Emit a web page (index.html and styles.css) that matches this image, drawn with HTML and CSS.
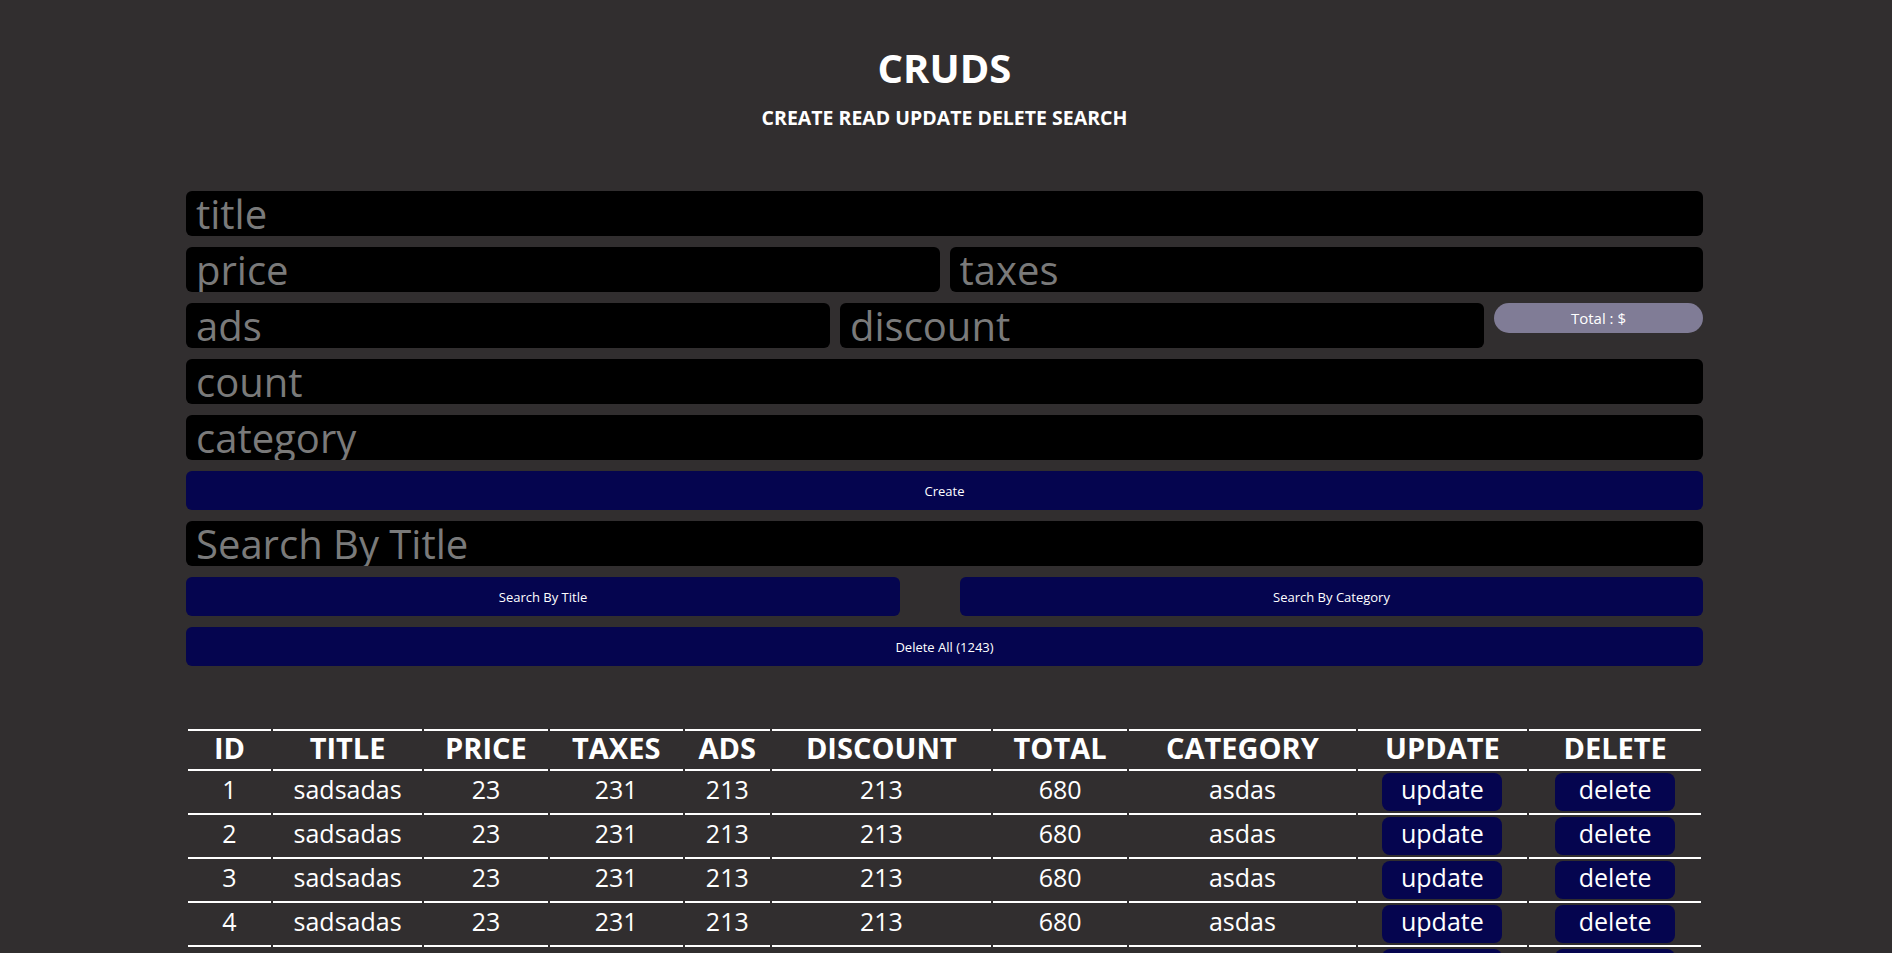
FILE: index.html
```html
<!DOCTYPE html>
<html lang="en">
<head>
<meta charset="utf-8">
<title>CRUDS</title>
<link rel="stylesheet" href="styles.css">
</head>
<body>
<div class="crud">
  <header class="head">
    <h1 class="head-title">CRUDS</h1>
    <h4 class="head-sub">CREATE READ UPDATE DELETE SEARCH</h4>
  </header>

  <div class="inputs">
    <input class="field" type="text" placeholder="title">
    <div class="price-row">
      <input class="field" type="number" placeholder="price">
      <input class="field" type="number" placeholder="taxes">
    </div>
    <div class="ads-row">
      <input class="field" type="number" placeholder="ads">
      <input class="field" type="number" placeholder="discount">
      <small class="total">Total : $</small>
    </div>
    <input class="field" type="number" placeholder="count">
    <input class="field" type="text" placeholder="category">
    <button class="btn">Create</button>
    <input class="field" type="text" placeholder="Search By Title">
    <div class="search-btns">
      <button class="btn">Search By Title</button>
      <button class="btn">Search By Category</button>
    </div>
    <button class="btn">Delete All (1243)</button>
  </div>

  <table class="products">
    <thead>
      <tr>
        <th class="c-id">ID</th>
        <th class="c-title">TITLE</th>
        <th class="c-price">PRICE</th>
        <th class="c-taxes">TAXES</th>
        <th class="c-ads">ADS</th>
        <th class="c-discount">DISCOUNT</th>
        <th class="c-total">TOTAL</th>
        <th class="c-category">CATEGORY</th>
        <th class="c-update">UPDATE</th>
        <th class="c-delete">DELETE</th>
      </tr>
    </thead>
    <tbody>
      <tr><td>1</td><td>sadsadas</td><td>23</td><td>231</td><td>213</td><td>213</td><td>680</td><td>asdas</td><td><button class="row-btn">update</button></td><td><button class="row-btn">delete</button></td></tr>
      <tr><td>2</td><td>sadsadas</td><td>23</td><td>231</td><td>213</td><td>213</td><td>680</td><td>asdas</td><td><button class="row-btn">update</button></td><td><button class="row-btn">delete</button></td></tr>
      <tr><td>3</td><td>sadsadas</td><td>23</td><td>231</td><td>213</td><td>213</td><td>680</td><td>asdas</td><td><button class="row-btn">update</button></td><td><button class="row-btn">delete</button></td></tr>
      <tr><td>4</td><td>sadsadas</td><td>23</td><td>231</td><td>213</td><td>213</td><td>680</td><td>asdas</td><td><button class="row-btn">update</button></td><td><button class="row-btn">delete</button></td></tr>
      <tr><td>5</td><td>sadsadas</td><td>23</td><td>231</td><td>213</td><td>213</td><td>680</td><td>asdas</td><td><button class="row-btn">update</button></td><td><button class="row-btn">delete</button></td></tr>
      <tr><td>6</td><td>sadsadas</td><td>23</td><td>231</td><td>213</td><td>213</td><td>680</td><td>asdas</td><td><button class="row-btn">update</button></td><td><button class="row-btn">delete</button></td></tr>
      <tr><td>7</td><td>sadsadas</td><td>23</td><td>231</td><td>213</td><td>213</td><td>680</td><td>asdas</td><td><button class="row-btn">update</button></td><td><button class="row-btn">delete</button></td></tr>
    </tbody>
  </table>
</div>
</body>
</html>
```

FILE: styles.css
```css
* {
  box-sizing: border-box;
}

body {
  margin: 0;
  background: #312e2f;
  color: #ffffff;
  font-family: "Open Sans", "Noto Sans", sans-serif;
}

.crud {
  width: 1517px;
  margin: 0 189px 0 186px;
  padding-bottom: 40px;
}

.head {
  text-align: center;
  padding-top: 44px;
}

.head-title {
  margin: 0;
  font-size: 40px;
  line-height: 48px;
  font-weight: 700;
}

.head-sub {
  margin: 12px 0 0;
  font-size: 19.5px;
  line-height: 28px;
  font-weight: 700;
}

.inputs {
  margin-top: 59px;
  display: flex;
  flex-direction: column;
  gap: 11px;
}

.field {
  display: block;
  width: 100%;
  height: 45px;
  padding: 0 10px;
  border: none;
  border-radius: 6px;
  outline: none;
  background: #000000;
  color: #ffffff;
  font-family: "Open Sans", "Noto Sans", sans-serif;
  font-size: 40px;
}

.field::placeholder {
  color: #7a7a7a;
}

.field::-webkit-outer-spin-button,
.field::-webkit-inner-spin-button {
  -webkit-appearance: none;
  margin: 0;
}

.price-row {
  display: grid;
  grid-template-columns: 1fr 1fr;
  column-gap: 10px;
}

.ads-row {
  display: grid;
  grid-template-columns: 644px 644px 1fr;
  column-gap: 10px;
  align-items: start;
}

.total {
  display: flex;
  align-items: center;
  justify-content: center;
  height: 30px;
  border-radius: 15px;
  background: #807c96;
  color: #ffffff;
  font-size: 15px;
}

.btn {
  display: block;
  width: 100%;
  height: 39px;
  border: none;
  border-radius: 6px;
  background: #05054f;
  color: #ffffff;
  font-family: "Open Sans", "Noto Sans", sans-serif;
  font-size: 13px;
  cursor: pointer;
}

.search-btns {
  display: grid;
  grid-template-columns: 714px 1fr;
  column-gap: 60px;
}

.products {
  width: 100%;
  margin-top: 61px;
  border-collapse: separate;
  border-spacing: 2px;
  text-align: center;
}

.products th {
  padding: 0 0 4px;
  height: 42px;
  font-size: 29px;
  line-height: 34px;
  font-weight: 700;
  border-top: 2px solid #ffffff;
  border-bottom: 2px solid #ffffff;
}

.products td {
  padding: 0 0 2px;
  height: 42px;
  font-size: 25px;
  line-height: 33px;
  border-bottom: 2px solid #ffffff;
  vertical-align: top;
}

.c-id { width: 82px; }
.c-title { width: 148px; }
.c-price { width: 122px; }
.c-taxes { width: 132px; }
.c-ads { width: 84px; }
.c-discount { width: 217px; }
.c-total { width: 133px; }
.c-category { width: 224px; }
.c-update { width: 168px; }
.c-delete { width: 170px; }

.row-btn {
  display: block;
  width: 120px;
  height: 38px;
  margin: 0 auto;
  padding: 0 0 6px;
  border: none;
  border-radius: 8px;
  background: #05054f;
  color: #ffffff;
  font-family: "Open Sans", "Noto Sans", sans-serif;
  font-size: 25px;
  line-height: 32px;
  cursor: pointer;
}
```
